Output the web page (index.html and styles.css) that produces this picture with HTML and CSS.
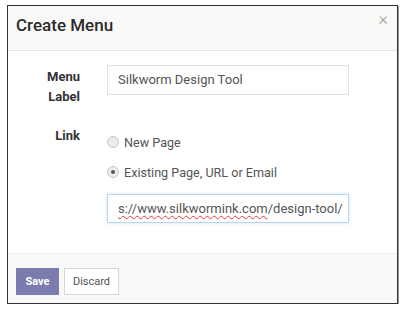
FILE: index.html
```html
<!DOCTYPE html>
<html>
<head>
<meta charset="utf-8">
<link rel="stylesheet" href="styles.css">
</head>
<body>
<div class="modal">
  <div class="modal-header">
    <h4 class="title">Create Menu</h4>
    <span class="close">&times;</span>
  </div>
  <div class="modal-body">
    <div class="form-row">
      <label class="label">Menu<br>Label</label>
      <div class="field">
        <div class="input">Silkworm Design Tool</div>
      </div>
    </div>
    <div class="form-row link-row">
      <label class="label">Link</label>
      <div class="field">
        <div class="radio"><span class="circle"></span><span>New Page</span></div>
        <div class="radio"><span class="circle checked"></span><span>Existing Page, URL or Email</span></div>
        <div class="input focused"><span class="spell">s://www.silkwormink.com</span>/design-tool/</div>
      </div>
    </div>
  </div>
  <div class="modal-footer">
    <button class="btn btn-primary">Save</button>
    <button class="btn btn-default">Discard</button>
  </div>
</div>
</body>
</html>
```
FILE: styles.css
```css
* { box-sizing: border-box; }
body {
  margin: 0;
  background: #fff;
  font-family: Roboto, "Liberation Sans", sans-serif;
  padding: 5px 0 0 7px;
}
.modal {
  width: 391px;
  height: 299px;
  border: 1px solid #333;
  box-shadow: 1px 1px 0 #9a9a9a;
  background: #fff;
  display: flex;
  flex-direction: column;
}
.modal-header {
  height: 45px;
  background: #f9f9f8;
  border-bottom: 1px solid #e6e6e6;
  display: flex;
  align-items: flex-start;
  justify-content: space-between;
  padding: 0 9px 0 8px;
}
.title {
  margin: 0;
  font-size: 17px;
  font-weight: 500;
  color: #2b2b2b;
  line-height: 20px;
  padding-top: 9px;
}
.close {
  color: #999;
  font-size: 18px;
  line-height: 16px;
  padding-top: 5px;
  font-weight: 300;
}
.modal-body {
  flex: 1;
  padding: 14px 0 0 0;
}
.form-row {
  display: grid;
  grid-template-columns: 72px 242px;
  column-gap: 27px;
}
.label {
  text-align: right;
  font-size: 13px;
  font-weight: bold;
  color: #333;
  line-height: 20px;
  padding-top: 2px;
}
.link-row {
  margin-top: 16px;
}
.link-row .label { padding-top: 3px; }
.input {
  height: 30px;
  border: 1px solid #e2e2e2;
  padding: 0 10px;
  font-size: 13px;
  line-height: 28px;
  color: #555;
  white-space: nowrap;
  overflow: hidden;
}
.input.focused {
  height: 29px;
  margin-top: 7px;
  border-color: #b9d6ec;
  box-shadow: 0 0 3px rgba(102, 175, 233, 0.35);
}
.spell {
  text-decoration: underline wavy #e03a3a;
  text-decoration-thickness: 1px;
  text-underline-offset: 2px;
}
.radio {
  height: 30px;
  display: flex;
  align-items: center;
  gap: 5px;
  font-size: 12.6px;
  color: #555;
}
.radio:first-child { margin-top: 4px; }
.circle {
  width: 12px;
  height: 12px;
  border-radius: 50%;
  border: 1px solid #c8c8c8;
  background: #ececec;
  display: flex;
  align-items: center;
  justify-content: center;
}
.circle.checked::after {
  content: "";
  width: 4px;
  height: 4px;
  border-radius: 50%;
  background: #555;
}
.modal-footer {
  height: 50px;
  background: #f9f9f8;
  border-top: 1px solid #ececec;
  padding: 14px 0 0 8px;
  display: flex;
  align-items: flex-start;
  gap: 5px;
}
.btn {
  height: 27px;
  font-family: Roboto, "Liberation Sans", sans-serif;
  font-size: 11px;
  padding: 0;
  border-radius: 0;
  cursor: pointer;
}
.btn-primary {
  width: 43px;
  background: #7c7bad;
  border: 1px solid #7c7bad;
  color: #fff;
  font-weight: bold;
}
.btn-default {
  width: 55px;
  background: #fff;
  border: 1px solid #d8d8d8;
  color: #555;
}
```
